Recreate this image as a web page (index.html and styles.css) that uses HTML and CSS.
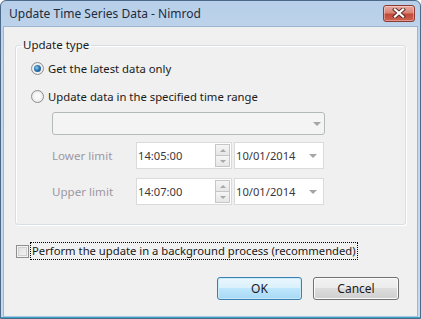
FILE: index.html
```html
<!DOCTYPE html>
<html>
<head>
<meta charset="utf-8">
<link rel="stylesheet" href="styles.css">
</head>
<body>
<div class="window">
  <div class="titlebar">
    <span class="title">Update Time Series Data - Nimrod</span>
    <div class="close">
      <svg width="14" height="10" viewBox="0 0 14 10">
        <path d="M3 1.5 L11 8.5 M11 1.5 L3 8.5" stroke="#5a2a24" stroke-width="4" stroke-linecap="square"/>
        <path d="M3 1.5 L11 8.5 M11 1.5 L3 8.5" stroke="#ffffff" stroke-width="2.2" stroke-linecap="square"/>
      </svg>
    </div>
  </div>
  <div class="client">
    <fieldset class="group">
      <legend class="group-label">Update type</legend>
      <div class="radio-row first"><span class="radio checked"></span><span>Get the latest data only</span></div>
      <div class="radio-row second"><span class="radio"></span><span>Update data in the specified time range</span></div>
      <div class="combo"><span class="arrow"></span></div>
      <div class="limit-row lower">
        <span class="limit-label">Lower limit</span>
        <div class="timebox">
          <span class="value">14:05:00</span>
          <div class="spin"><span class="spin-btn up"><i></i></span><span class="spin-btn down"><i></i></span></div>
        </div>
        <div class="datebox"><span class="value">10/01/2014</span><span class="arrow"></span></div>
      </div>
      <div class="limit-row upper">
        <span class="limit-label">Upper limit</span>
        <div class="timebox">
          <span class="value">14:07:00</span>
          <div class="spin"><span class="spin-btn up"><i></i></span><span class="spin-btn down"><i></i></span></div>
        </div>
        <div class="datebox"><span class="value">10/01/2014</span><span class="arrow"></span></div>
      </div>
    </fieldset>
    <div class="check-row"><span class="checkbox"></span><span class="focus">Perform the update in a background process (recommended)</span></div>
    <div class="buttons">
      <button class="btn ok">OK</button>
      <button class="btn cancel">Cancel</button>
    </div>
  </div>
</div>
</body>
</html>
```
FILE: styles.css
```css
* { box-sizing: border-box; }
html, body { margin: 0; padding: 0; background: #fff; }
body {
  font-family: "Noto Sans", "Open Sans", sans-serif;
  font-size: 11.3px;
  color: #1a1a1a;
}
.window {
  width: 421px;
  height: 319px;
  border: 1px solid #4b6a8a;
  border-radius: 6px 6px 0 0;
  background: linear-gradient(#b8cfe9, #c2d7ee 60px, #c5daee);
  padding: 0 2px 1px;
  display: flex;
  flex-direction: column;
  box-shadow: inset 0 -1px 0 #39a1c4;
}
.titlebar {
  height: 25px;
  display: flex;
  align-items: center;
  justify-content: space-between;
  padding-left: 6px;
  padding-right: 3px;
}
.title { font-size: 12px; color: #1e2b3a; }
.close {
  width: 32px;
  height: 17px;
  margin-top: -1px;
  border: 1px solid #8e3a33;
  border-radius: 3px;
  background: linear-gradient(#e8aba1, #d88476 45%, #c14a3a 55%, #cc6450);
  display: flex;
  align-items: center;
  justify-content: center;
  box-shadow: inset 0 0 0 1px rgba(255,255,255,0.35);
}
.client {
  flex: 1;
  background: #f0f0f0;
  border: 1px solid #9fb6cf;
  border-bottom-color: #aac6e2;
  display: flex;
  flex-direction: column;
}
.group {
  margin: 10px 11px 0 11px;
  padding: 0 0 16px 5px;
  border: 1px solid #d5dfe5;
  border-radius: 3px;
  box-shadow: inset 1px 1px 0 #fff, 1px 1px 0 #fff;
  min-width: 0;
  height: 188px;
}
.group-label {
  padding: 0 2px;
  line-height: 16px;
  font-size: 11.5px;
  color: #1a1a1a;
}
.radio-row {
  display: flex;
  align-items: center;
  height: 16px;
  margin-left: 10px;
}
.radio-row.first { margin-top: 7px; }
.radio-row.second { margin-top: 12px; }
.radio {
  width: 13px;
  height: 13px;
  border-radius: 50%;
  border: 1px solid #8f8f8f;
  background: radial-gradient(circle at 50% 50%, #fafafa 30%, #dcdcdc 100%);
  margin-right: 4px;
  display: flex;
  align-items: center;
  justify-content: center;
  flex: none;
}
.radio.checked::after {
  content: "";
  width: 7px;
  height: 7px;
  border-radius: 50%;
  background: radial-gradient(circle at 40% 40%, #8fd3f8 0, #2a74b3 45%, #163e66 100%);
}
.combo {
  margin: 8px 0 0 31px;
  width: 273px;
  height: 23px;
  border: 1px solid #b3baba;
  border-radius: 3px;
  background: #f4f4f4;
  display: flex;
  align-items: center;
  justify-content: flex-end;
  padding-right: 3px;
}
.arrow {
  width: 0;
  height: 0;
  border-left: 4px solid transparent;
  border-right: 4px solid transparent;
  border-top: 4px solid #a5a5a5;
}
.limit-row {
  display: flex;
  align-items: center;
  margin-left: 31px;
  height: 27px;
}
.limit-row.lower { margin-top: 7px; }
.limit-row.upper { margin-top: 9px; }
.limit-label {
  width: 84px;
  color: #9c97a3;
  font-size: 11.6px;
}
.timebox, .datebox {
  height: 27px;
  border: 1px solid #dadada;
  background: #fff;
  display: flex;
  align-items: center;
  color: #3b3640;
  font-size: 11.2px;
}
.timebox {
  width: 96px;
  padding-left: 1px;
  justify-content: space-between;
  padding-right: 1px;
}
.datebox {
  width: 90px;
  margin-left: 2px;
  padding-left: 1px;
  padding-right: 6px;
  justify-content: space-between;
}
.spin {
  display: flex;
  flex-direction: column;
  width: 15px;
  height: 23px;
}
.spin-btn {
  flex: 1;
  border: 1px solid #c6c6c6;
  background: linear-gradient(#f6f6f6, #e6e6e6);
  display: flex;
  align-items: center;
  justify-content: center;
}
.spin-btn.down { border-top: none; }
.spin-btn i {
  width: 0; height: 0;
  border-left: 3px solid transparent;
  border-right: 3px solid transparent;
}
.spin-btn.up i { border-bottom: 3px solid #a8a8a8; }
.spin-btn.down i { border-top: 3px solid #a8a8a8; }
.check-row {
  display: flex;
  align-items: center;
  margin: 17px 0 0 12px;
  height: 18px;
}
.checkbox {
  width: 13px;
  height: 13px;
  border: 1px solid #8f8f8f;
  background: linear-gradient(135deg, #dcdcdc, #f7f7f7);
  box-shadow: inset 0 0 0 1px #f4f4f4, inset 0 0 0 2px #d0d0d0;
  margin-right: 1px;
  flex: none;
}
.focus {
  border: 1px dotted #000;
  padding: 0 1px;
  height: 18px;
  line-height: 16px;
  font-size: 11.25px;
}
.buttons {
  display: flex;
  justify-content: flex-end;
  gap: 11px;
  margin: 17px 18px 0 0;
}
.btn {
  width: 85px;
  height: 23px;
  font-family: inherit;
  font-size: 12px;
  color: #1a1a1a;
  border-radius: 3px;
  padding: 0;
}
.btn.cancel { width: 86px; }
.btn.ok {
  border: 1px solid #3c7fb1;
  background: linear-gradient(#eaf6fd, #d9f0fc 50%, #bee6fd 50%, #a7d9f5);
  box-shadow: inset 0 0 0 1px #c8eafb;
}
.btn.cancel {
  border: 1px solid #707070;
  background: linear-gradient(#f2f2f2, #ebebeb 50%, #dddddd 50%, #cfcfcf);
  box-shadow: inset 0 0 0 1px #fcfcfc;
}
```
